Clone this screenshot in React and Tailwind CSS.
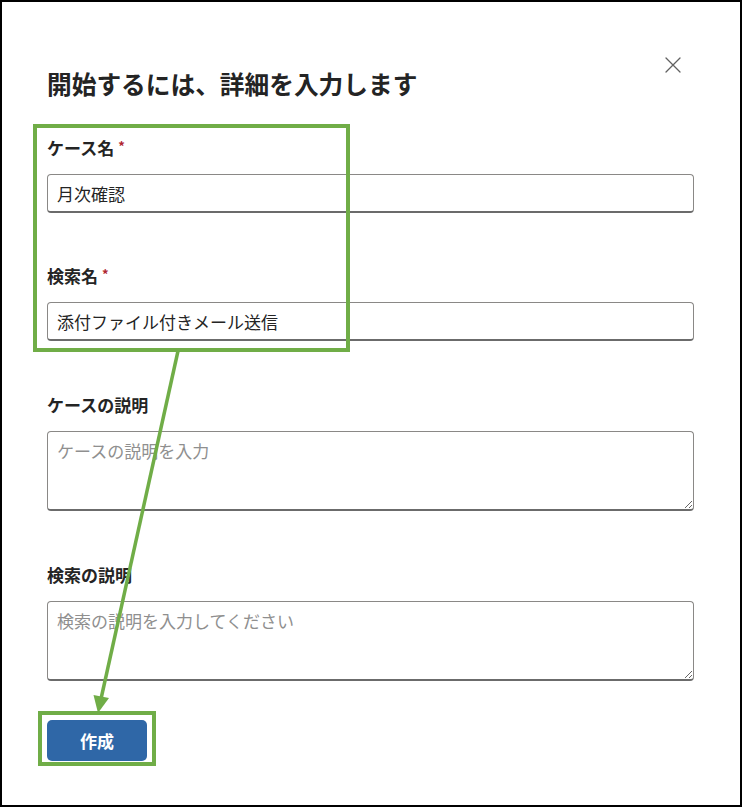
import React from "react";

function Field({ label, required, children, className = "" }) {
  return (
    <div className={"flex flex-col " + className}>
      <label className="h-6 leading-6 mb-[14px] text-[17px] font-bold text-[#242424] flex items-start">
        <span>{label}</span>
        {required && (
          <span className="ml-[4px] text-[13px] leading-[20px] font-bold text-[#b0272f]">*</span>
        )}
      </label>
      {children}
    </div>
  );
}

const inputCls =
  "w-full border border-[#8a8886] border-b-2 border-b-[#6b6b6b] rounded-[4px] px-[9px] text-[17px] text-[#242424] placeholder:text-[#8f8f8f] outline-none bg-white";

export default function App() {
  return (
    <div className="relative w-[742px] h-[807px] border-2 border-black bg-white font-[Noto_Sans_CJK_JP,sans-serif] flex flex-col pl-[45px] pr-[46px]">
      <div className="flex items-start justify-between">
        <h1 className="mt-[65px] text-[24.7px] leading-[32px] font-bold text-[#242424]">
          開始するには、詳細を入力します
        </h1>
        <button className="mt-[53px] mr-[11px] w-5 h-5 flex items-center justify-center text-[#616161]">
          <svg width="16" height="16" viewBox="0 0 16 16" fill="none" stroke="currentColor" strokeWidth="1.3" strokeLinecap="round">
            <path d="M1 1 L15 15 M15 1 L1 15" />
          </svg>
        </button>
      </div>

      <form className="flex flex-col mt-[37px]">
        <Field label="ケース名" required>
          <input className={inputCls + " h-[39px]"} defaultValue="月次確認" />
        </Field>
        <Field label="検索名" required className="mt-[51px]">
          <input className={inputCls + " h-[39px]"} defaultValue="添付ファイル付きメール送信" />
        </Field>
        <Field label="ケースの説明" className="mt-[52px]">
          <textarea
            className={inputCls + " h-[80px] py-[7px] leading-[24px]"}
            placeholder="ケースの説明を入力"
          />
        </Field>
        <Field label="検索の説明" className="mt-[52px]">
          <textarea
            className={inputCls + " h-[80px] py-[7px] leading-[24px]"}
            placeholder="検索の説明を入力してください"
          />
        </Field>
        <div className="mt-[39px]">
          <button
            type="button"
            className="w-[100px] h-[41px] rounded-[5px] bg-[#2f67a7] text-white text-[17px] font-bold"
          >
            作成
          </button>
        </div>
      </form>

      {/* annotations */}
      <div className="pointer-events-none absolute left-[31px] top-[122px] w-[317px] h-[228px] border-4 border-[#70ad47]" />
      <div className="pointer-events-none absolute left-[36px] top-[709px] w-[118px] h-[55px] border-4 border-[#70ad47]" />
      <svg
        className="pointer-events-none absolute -left-[2px] -top-[2px] w-[742px] h-[807px]"
        viewBox="0 0 742 807"
      >
        <line x1="178" y1="351" x2="101.2" y2="698" stroke="#70ad47" strokeWidth="3.5" />
        <polygon points="98,713 109,698 93.5,695" fill="#70ad47" />
      </svg>
    </div>
  );
}
